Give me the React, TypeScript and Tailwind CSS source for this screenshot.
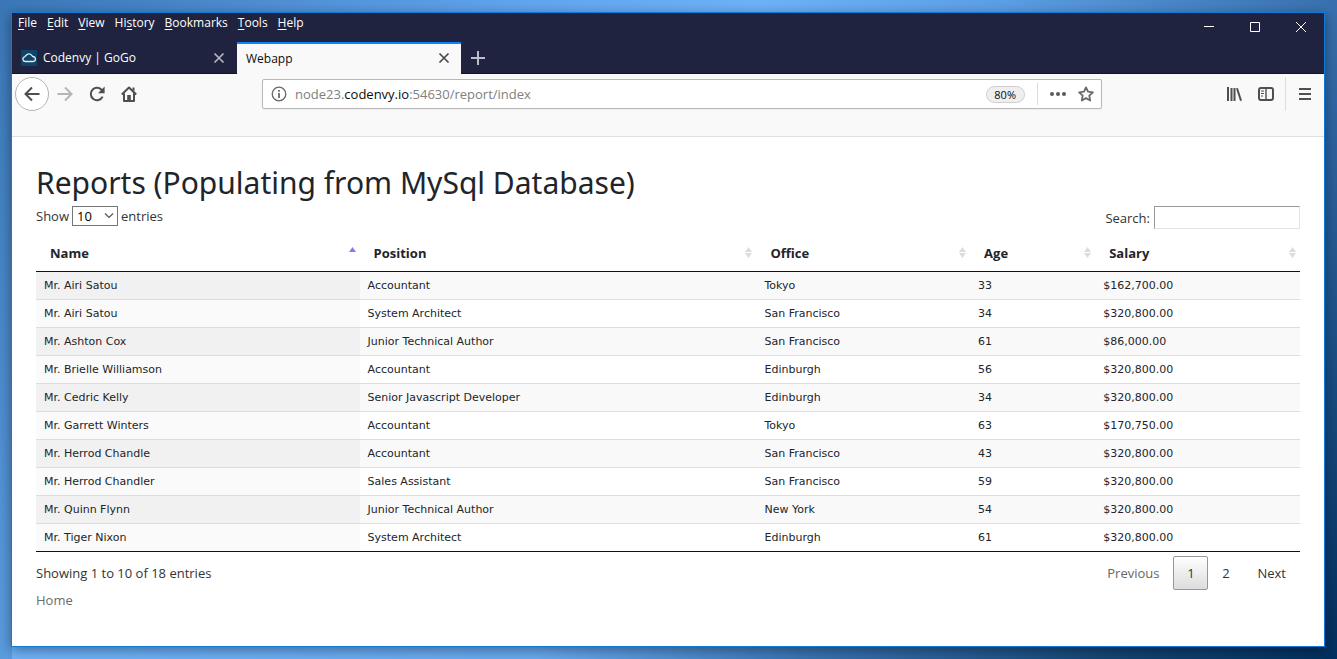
import type { ReactNode } from "react";

const menus: [string, string, string][] = [
  ["", "F", "ile"],
  ["", "E", "dit"],
  ["", "V", "iew"],
  ["Hi", "s", "tory"],
  ["", "B", "ookmarks"],
  ["", "T", "ools"],
  ["", "H", "elp"],
];

const columns = [
  { label: "Name", width: "w-[25.6%]" },
  { label: "Position", width: "w-[31.4%]" },
  { label: "Office", width: "w-[16.9%]" },
  { label: "Age", width: "w-[9.9%]" },
  { label: "Salary", width: "w-[16.2%]" },
];

const rows = [
  ["Mr. Airi Satou", "Accountant", "Tokyo", "33", "$162,700.00"],
  ["Mr. Airi Satou", "System Architect", "San Francisco", "34", "$320,800.00"],
  ["Mr. Ashton Cox", "Junior Technical Author", "San Francisco", "61", "$86,000.00"],
  ["Mr. Brielle Williamson", "Accountant", "Edinburgh", "56", "$320,800.00"],
  ["Mr. Cedric Kelly", "Senior Javascript Developer", "Edinburgh", "34", "$320,800.00"],
  ["Mr. Garrett Winters", "Accountant", "Tokyo", "63", "$170,750.00"],
  ["Mr. Herrod Chandle", "Accountant", "San Francisco", "43", "$320,800.00"],
  ["Mr. Herrod Chandler", "Sales Assistant", "San Francisco", "59", "$320,800.00"],
  ["Mr. Quinn Flynn", "Junior Technical Author", "New York", "54", "$320,800.00"],
  ["Mr. Tiger Nixon", "System Architect", "Edinburgh", "61", "$320,800.00"],
];

function Icon({ children, className = "size-4" }: { children: ReactNode; className?: string }) {
  return (
    <svg viewBox="0 0 16 16" className={className} fill="none" stroke="currentColor" strokeWidth="2" aria-hidden="true">
      {children}
    </svg>
  );
}

function CloseIcon({ className }: { className: string }) {
  return (
    <Icon className={className}>
      <path d="M3.5 3.5l9 9M12.5 3.5l-9 9" strokeWidth="1.7" />
    </Icon>
  );
}

function TitleBar() {
  return (
    <header className="flex h-[61px] flex-col bg-[#20233f] text-xs text-white">
      <div className="flex h-[29px] items-start justify-between">
        <nav className="flex gap-[10px] pt-[2px] pl-[6px] leading-4">
          {menus.map(([before, key, after]) => (
            <button key={key + after} type="button">
              {before}
              <span className="underline underline-offset-2">{key}</span>
              {after}
            </button>
          ))}
        </nav>
        <div className="flex">
          <button type="button" aria-label="Minimize" className="flex h-7 w-[46px] items-center justify-center">
            <svg viewBox="0 0 10 10" className="size-[10px]" fill="none" stroke="currentColor" aria-hidden="true">
              <path d="M0 4.5h10" />
            </svg>
          </button>
          <button type="button" aria-label="Maximize" className="flex h-7 w-[46px] items-center justify-center">
            <svg viewBox="0 0 10 10" className="size-[10px]" fill="none" stroke="currentColor" aria-hidden="true">
              <path d="M.5.5h9v9h-9z" />
            </svg>
          </button>
          <button type="button" aria-label="Close window" className="flex h-7 w-[46px] items-center justify-center">
            <svg viewBox="0 0 10 10" className="size-[10px]" fill="none" stroke="currentColor" aria-hidden="true">
              <path d="M0 0l10 10M10 0L0 10" />
            </svg>
          </button>
        </div>
      </div>
      <div className="flex h-8 items-stretch">
        <div className="flex w-[225px] items-center justify-between border-b border-[#12142f] pr-[10px] pl-[9px]">
          <div className="flex items-center gap-[6px]">
            <svg viewBox="0 0 16 16" className="size-4" aria-hidden="true">
              <path d="M0 0h16v16H0z" fill="#0d4568" />
              <path
                d="M4.2 11.5a2.4 2.4 0 0 1-.6-4.7C4.8 6.4 5.2 3.9 8 3.9c2.6 0 3.2 1.9 3.7 2.6 1.5.2 2.7 1 2.7 2.5s-1.2 2.5-2.6 2.5z"
                fill="none"
                stroke="#dfe8ee"
                strokeWidth="1.3"
              />
            </svg>
            <span className="pt-px">Codenvy | GoGo</span>
          </div>
          <button type="button" aria-label="Close Codenvy tab" className="text-[#b4b5c2]">
            <CloseIcon className="size-4" />
          </button>
        </div>
        <div className="flex w-[224px] items-center justify-between border-t-2 border-[#0a84ff] bg-[#f9f9fa] pr-[9px] pb-[2px] pl-[9px] text-[#0c0c0d]">
          <span className="pt-px">Webapp</span>
          <button type="button" aria-label="Close Webapp tab" className="text-[#4a4a4b]">
            <CloseIcon className="size-4" />
          </button>
        </div>
        <div className="flex grow items-center border-b border-[#12142f] pl-[9px]">
          <button type="button" aria-label="New tab" className="text-[#bcbdc9]">
            <Icon>
              <path d="M8 1v14M1 8h14" />
            </Icon>
          </button>
        </div>
      </div>
    </header>
  );
}

function Toolbar() {
  return (
    <div className="flex h-[63px] items-start border-b border-[#e0e0e1] bg-[#f9f9fa] pt-[3px] text-[#4f4f50]">
      <div className="flex w-[250px] shrink-0 items-center pl-[3px]">
        <button
          type="button"
          aria-label="Back"
          className="flex size-[34px] items-center justify-center rounded-full border border-[#b5b5b6] bg-white"
        >
          <Icon>
            <path d="M15.5 8H1.5M8 1.5L1.5 8 8 14.5" />
          </Icon>
        </button>
        <button type="button" aria-label="Forward" className="ml-2 text-[#b5b5b6]">
          <Icon>
            <path d="M.5 8h14M8 1.5L14.5 8 8 14.5" />
          </Icon>
        </button>
        <button type="button" aria-label="Reload" className="ml-4">
          <Icon>
            <path d="M13.2 4.6A6.2 6.2 0 1 0 13.6 10.6" />
            <path d="M15.6.6v6.6H9z" fill="currentColor" stroke="none" />
          </Icon>
        </button>
        <button type="button" aria-label="Home" className="ml-4">
          <Icon>
            <path d="M.8 8.5L8 1.5l7.2 7M3 7.5V15h10V7.5" strokeLinejoin="round" />
            <path d="M11.5 1.5h2v4l-2-2z" fill="currentColor" stroke="none" />
            <path d="M6.2 15V9h3.6v6z" fill="currentColor" stroke="none" />
          </Icon>
        </button>
      </div>
      <div className="mt-[2px] flex h-[30px] w-[64%] items-center rounded-xs border border-[#b8b8b9] bg-white pr-[7px] pl-2 shadow-xs">
        <svg viewBox="0 0 16 16" className="size-4 shrink-0 text-[#6a6a6b]" fill="none" stroke="currentColor" aria-hidden="true">
          <circle cx="8" cy="8" r="6.8" strokeWidth="1.3" />
          <path d="M8 7v5M8 4v1.8" strokeWidth="1.8" />
        </svg>
        <div className="ml-2 grow pt-px text-[13px] text-[#808081]">
          node23.<span className="text-[#0c0c0d]">codenvy.io</span>:54630/report/index
        </div>
        <button
          type="button"
          className="h-[17px] w-[39px] rounded-full border border-[#cfcfd0] bg-[#efeff0] text-[11px] leading-[15px] text-[#0c0c0d]"
        >
          80%
        </button>
        <div className="mx-3 h-[22px] w-px bg-[#dcdcdd]" />
        <button type="button" aria-label="Page actions">
          <svg viewBox="0 0 16 16" className="size-4 text-[#5a5a5b]" fill="currentColor" aria-hidden="true">
            <circle cx="2" cy="8" r="2" />
            <circle cx="8" cy="8" r="2" />
            <circle cx="14" cy="8" r="2" />
          </svg>
        </button>
        <button type="button" aria-label="Bookmark this page" className="ml-3 text-[#6a6a6b]">
          <Icon>
            <path
              d="M8 1.4l2 4.3 4.9.6-3.6 3.3.9 4.9L8 12.1l-4.2 2.4.9-4.9L1.1 6.3l4.9-.6z"
              strokeLinejoin="round"
              strokeWidth="1.8"
            />
          </Icon>
        </button>
      </div>
      <div className="ml-auto flex items-center">
        <button type="button" aria-label="Library">
          <Icon>
            <path d="M2 1v14M5.5 2v13M8.5 2v13M11 2.3l4 12.4" />
          </Icon>
        </button>
        <button type="button" aria-label="Sidebars" className="ml-4">
          <Icon>
            <rect x="1" y="2" width="14" height="12" rx="2" />
            <path d="M8 2v12" strokeWidth="1.4" />
            <path d="M3 5h3M3 7.5h3M3 10h2" strokeWidth="1" />
          </Icon>
        </button>
        <div className="ml-[11px] h-[34px] w-px bg-[#dcdcdd]" />
        <button type="button" aria-label="Open menu" className="mr-[11px] ml-[11px]">
          <Icon>
            <path d="M2 3h12M2 8h12M2 13h12" />
          </Icon>
        </button>
      </div>
    </div>
  );
}

function SortMark({ active }: { active: boolean }) {
  return (
    <svg viewBox="0 0 7 11" className="h-[11px] w-[7px] shrink-0" aria-hidden="true">
      {active ? (
        <path d="M3.5 0L7 5H0z" fill="#8080e6" />
      ) : (
        <path d="M3.5 0L7 5H0zM0 6h7L3.5 11z" fill="#dcdcdc" />
      )}
    </svg>
  );
}

function ReportTable() {
  return (
    <table className="w-full table-fixed border-separate border-spacing-0 text-[#212529]">
      <thead>
        <tr>
          {columns.map(({ label, width }, i) => (
            <th
              key={label}
              className={`${width} h-[37px] border-b border-[#111111] pr-1 pb-px pl-[14px] text-left text-[13px] font-bold`}
              aria-sort={i === 0 ? "ascending" : "none"}
            >
              <button type="button" className="flex w-full items-center justify-between">
                {label}
                <SortMark active={i === 0} />
              </button>
            </th>
          ))}
        </tr>
      </thead>
      <tbody className="font-['DejaVu_Sans',Verdana,sans-serif] text-[11px] leading-4">
        {rows.map((row, r) => (
          <tr key={r} className="group odd:bg-[#f9f9f9]">
            {row.map((cell, c) => (
              <td
                key={c}
                className="h-7 border-b border-[#dddddd] px-2 pt-px group-last:border-[#111111] first:bg-[#fafafa] group-odd:first:bg-[#f1f1f1]"
              >
                {cell}
              </td>
            ))}
          </tr>
        ))}
      </tbody>
    </table>
  );
}

function ReportPage() {
  return (
    <main className="grow bg-white px-6 pt-[26px] text-[13px] leading-5 text-[#333333]">
      <h1 className="font-['Noto_Sans','Segoe_UI',sans-serif] text-[30px] leading-10 text-[#212529]">
        Reports (Populating from MySql Database)
      </h1>
      <div className="mt-[3px] flex items-start justify-between">
        <label className="flex items-center gap-[3px]">
          Show
          <span className="grid items-center">
            <select
              defaultValue="10"
              className="col-start-1 row-start-1 h-5 w-[46px] appearance-none border border-[#767676] bg-white pl-1 leading-4 text-black"
            >
              <option>10</option>
              <option>25</option>
              <option>50</option>
              <option>100</option>
            </select>
            <svg
              viewBox="0 0 10 6"
              className="pointer-events-none col-start-1 row-start-1 mr-1 h-[6px] w-[10px] justify-self-end"
              fill="none"
              stroke="#555555"
              aria-hidden="true"
            >
              <path d="M1 .5l4 4 4-4" strokeWidth="1.2" />
            </svg>
          </span>
          entries
        </label>
        <label className="flex items-center gap-1">
          Search:
          <input
            type="search"
            className="h-[23px] w-[146px] border border-t-[#999999] border-r-[#e3e3e3] border-b-[#e3e3e3] border-l-[#999999] bg-white px-1"
          />
        </label>
      </div>
      <div className="mt-[6px]">
        <ReportTable />
      </div>
      <div className="flex items-start justify-between pt-1">
        <div className="pt-[7px]">Showing 1 to 10 of 18 entries</div>
        <div className="flex">
          <button type="button" disabled className="h-[34px] px-[14px] text-[#666666]">
            Previous
          </button>
          <button
            type="button"
            aria-current="page"
            className="h-[34px] w-[35px] rounded-xs border border-[#979797] bg-linear-to-b from-white to-[#dcdcdc]"
          >
            1
          </button>
          <button type="button" className="h-[34px] w-[35px]">
            2
          </button>
          <button type="button" className="h-[34px] px-[14px]">
            Next
          </button>
        </div>
      </div>
      <a href="#home" className="text-[#6c6c6c]">
        Home
      </a>
    </main>
  );
}

export default function App() {
  return (
    <div className="flex min-h-screen flex-col bg-[linear-gradient(90deg,#3b77b7,#62a6f0_40%,#6eb2f8_57%,#5c9fe5_75%,#3870ae),linear-gradient(180deg,#3b77b7,#5b9cdf),linear-gradient(180deg,#3870ae,#1d528a_50%,#02305f),linear-gradient(90deg,#6eb2f8,#68aaf0_40%,#3a74b3_60%,#12426f_85%,#02305f)] bg-[size:100%_12px,12px_100%,13px_100%,100%_100%] bg-[position:top,left,right,bottom] bg-no-repeat pt-3 pr-3 pb-3 pl-[11px] font-['Open_Sans','Segoe_UI',sans-serif]">
      <div className="flex grow flex-col border border-[#0f7ad8] shadow-[0_3px_12px_rgba(0,0,0,0.4)]">
        <TitleBar />
        <Toolbar />
        <ReportPage />
      </div>
    </div>
  );
}
